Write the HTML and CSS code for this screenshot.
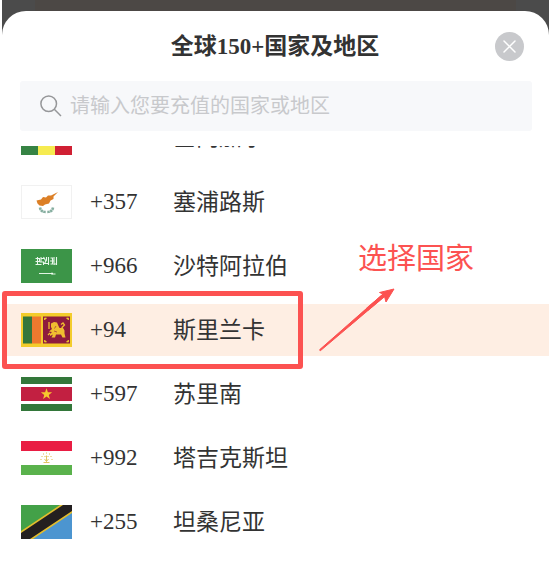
FILE: index.html
```html
<!DOCTYPE html>
<html lang="zh-CN">
<head>
    <meta charset="UTF-8">
    <meta name="viewport" content="width=device-width, initial-scale=1.0">
    <title>全球150+国家及地区</title>
    <link rel="stylesheet" href="styles.css">
</head>
<body>

    <main class="page">
        <section class="sheet">

            <!-- Title bar -->
            <header class="sheet-header">
                <h1>全球150+国家及地区</h1>
                <button class="close-button" type="button" aria-label="关闭">
                    <svg viewBox="0 0 29 29"><path d="M9 9 20 20M20 9 9 20" fill="none" stroke="#fff" stroke-width="1.500" stroke-linecap="round"/></svg>
                </button>
            </header>

            <!-- Search -->
            <label class="search-box">
                <svg class="search-icon" viewBox="0 0 22 22" aria-hidden="true">
                    <circle cx="8.700" cy="8.700" r="7.800"/>
                    <path d="M14.300 14.300 21 21"/>
                </svg>
                <input type="text" placeholder="请输入您要充值的国家或地区" aria-label="搜索国家或地区">
            </label>

            <!-- Country list -->
            <div class="country-scroll">
                <ul class="country-list">
                    <li>
                        <button class="country" type="button">
                            <svg class="flag" viewBox="0 0 51 34">
                                <rect width="17" height="34" fill="#368344"/>
                                <rect x="17" width="17" height="34" fill="#f6eb50"/>
                                <rect x="34" width="17" height="34" fill="#d02033"/>
                            </svg>
                            <span class="code">+221</span>
                            <span class="name">塞内加尔</span>
                        </button>
                    </li>
                    <li>
                        <button class="country" type="button">
                            <svg class="flag" viewBox="0 0 51 34">
                                <rect x=".5" y=".5" width="50" height="33" fill="#fff" stroke="#f1f1f1"/>
                                <path d="M15.500 15.500 20 14.500 22 12 25 12.500 27 10.500 30 10.500 37 7 32.500 11.500 32.500 14 29.500 15.500 28 18.500 24 19.500 22 21 18.500 20.500 16.500 18.500Z" fill="#dc7f26"/>
                                <path d="M19 22.500C19.500 26 22 27 25 27M32 22.500C31.500 26 29 27 26 27" fill="none" stroke="#86aea0" stroke-width="2.600" stroke-dasharray="2.400 .4"/>
                            </svg>
                            <span class="code">+357</span>
                            <span class="name">塞浦路斯</span>
                        </button>
                    </li>
                    <li>
                        <button class="country" type="button">
                            <svg class="flag" viewBox="0 0 51 34">
                                <rect width="51" height="34" fill="#3c9548"/>
                                <path d="M14.500 9.500h4v3h-4M16.500 8v8M14.500 15.500h6M20 8v5M18.500 13h4v3M22.500 8l2 3.500M25.500 8v3l-2 3.500h4M27.500 8v8M29.500 9h2v6h-2M33 8v8M35.500 8v8M29 12h4M20.500 9.500h3M33 15h3" fill="none" stroke="#e9f7eb" stroke-width="1.100"/>
                                <path d="M18 24.500h14M31 23.500v2M30.500 25h4" fill="none" stroke="#f4fff5" stroke-width=".9"/>
                            </svg>
                            <span class="code">+966</span>
                            <span class="name">沙特阿拉伯</span>
                        </button>
                    </li>
                    <li>
                        <button class="country selected" type="button">
                            <svg class="flag" viewBox="0 0 51 34">
                                <rect width="51" height="34" fill="#f3cc2c"/>
                                <rect x="2" y="3.500" width="9" height="27" fill="#34763b"/>
                                <rect x="11" y="3.500" width="9" height="27" fill="#ee792e"/>
                                <rect x="22" y="3.500" width="27" height="27" fill="#8e1b3d"/>
                                <path d="M23.500 5h2l-2 2ZM47.500 5h-2l2 2ZM23.500 29h2l-2-2ZM47.500 29h-2l2-2Z" fill="#f3cc2c" stroke="#f3cc2c" stroke-width=".7"/>
                                <path d="M30 10.500l3-1.500 3 .5 1.500 3.500 1 2H42l1.500 2.500v3l1 4h-3l-1.500-3H35l-1 3h-3.500l1.500-3-3 1.500v-2l2-2-3-.5 3-2.500-1-2Z" fill="#f0bd30"/>
                                <path d="M28 9v7M42 17l-1-2.500 2.500-2.500-1.500-2-2 1.500M29 20l-2 2" fill="none" stroke="#f0bd30" stroke-width="1.300"/>
                                <path d="M35 13l-1.500 2.500M33 18l3 1" fill="none" stroke="#8e1b3d" stroke-width=".6"/>
                            </svg>
                            <span class="code">+94</span>
                            <span class="name">斯里兰卡</span>
                        </button>

                        <!-- Hint drawn over the selected row -->
                        <span class="hint-frame"></span>
                        <span class="hint-text">选择国家</span>
                        <svg class="hint-arrow" viewBox="0 0 76 64" aria-hidden="true">
                            <path d="M1.300 62.800 65.500 8.500 67 14 75 1 60.500 4.500 64 6 .5 61.800Z" fill="#fc5251" stroke="#fc5251" stroke-linejoin="round"/>
                            <path d="M30 37.500 63 8" stroke="#fc5251" stroke-width="2.200"/>
                            <path d="M48 21.500 66 6.500" stroke="#fc5251" stroke-width="3.500"/>
                        </svg>
                    </li>
                    <li>
                        <button class="country" type="button">
                            <svg class="flag" viewBox="0 0 51 34">
                                <rect width="51" height="34" fill="#fff"/>
                                <path d="M0 0h51v7H0ZM0 27h51v7H0Z" fill="#33773a"/>
                                <rect y="10" width="51" height="14" fill="#c22041"/>
                                <path d="M25.500 11.200 26.900 15.200 31.100 15.300 27.800 17.900 28.900 22 25.500 19.600 22.100 22 23.200 17.900 19.900 15.300 24.100 15.200Z" fill="#f6c82e"/>
                            </svg>
                            <span class="code">+597</span>
                            <span class="name">苏里南</span>
                        </button>
                    </li>
                    <li>
                        <button class="country" type="button">
                            <svg class="flag" viewBox="0 0 51 34">
                                <rect width="51" height="34" fill="#fff"/>
                                <rect width="51" height="10" fill="#e91d43"/>
                                <rect y="24" width="51" height="10" fill="#5ab24c"/>
                                <path d="M25.500 14.500v6M23.500 18l2 2.500 2-2.500M22.500 21.500h6" fill="none" stroke="#e2c563" stroke-width="1"/>
                                <path d="M19.500 18.500h1M20.500 15.500h1M22 13h1M25 12h1M28 13h1M29.500 15.500h1M30.500 18.500h1M23.500 15.500h1M26.500 15.500h1" stroke="#dfbb4b" stroke-width="1.200"/>
                            </svg>
                            <span class="code">+992</span>
                            <span class="name">塔吉克斯坦</span>
                        </button>
                    </li>
                    <li>
                        <button class="country" type="button">
                            <svg class="flag" viewBox="0 0 51 34">
                                <rect width="51" height="34" fill="#43a148"/>
                                <path d="M51 0v34H0Z" fill="#4c95d0"/>
                                <path d="M0 26 39 0H51V8L12 34H0Z" fill="#e3bd2c"/>
                                <path d="M0 28 42 0h9v6L9 34H0Z" fill="#231f20"/>
                            </svg>
                            <span class="code">+255</span>
                            <span class="name">坦桑尼亚</span>
                        </button>
                    </li>
                </ul>
            </div>
        </section>
    </main>

</body>
</html>
```
FILE: styles.css
```css
* {
    box-sizing: border-box;
}

body {
    margin: 0;
    background-color: #fff;
    color: #333;
    font-family: 'Liberation Serif', 'Noto Sans CJK SC', serif;
}

button, input {
    font-family: inherit;
    color: inherit;
}

.page {
    min-height: 100vh;
    margin-left: 2px;
    padding-top: 11px;
    background: linear-gradient(to right, #4b4b4b 33px, #4c4845 33px, #4c4845 calc(100% - 33px), #4b4b4b calc(100% - 33px));
}

.sheet {
    min-height: calc(100vh - 11px);
    padding-top: 10px;
    background-color: #fff;
    border-radius: 24px 24px 0 0;
}

.sheet-header {
    display: grid;
    grid-template-columns: 1fr auto 1fr;
    align-items: center;
    height: 50px;
    padding: 0 25px 0 24px;
}

.sheet-header h1 {
    grid-column: 2;
    margin: 0;
    padding-top: 2px;
    font-size: 23px;
    line-height: 32px;
}

.close-button {
    justify-self: end;
    width: 29px;
    height: 29px;
    padding: 0;
    border: none;
    border-radius: 50%;
    background-color: #c8c9cc;
    cursor: pointer;
}

.close-button svg {
    display: block;
}

/* Search */
.search-box {
    display: flex;
    align-items: center;
    gap: 8px;
    height: 50px;
    margin: 10px 17px 0 18px;
    padding: 0 20px;
    background-color: #f7f8fa;
    border-radius: 3px;
}

.search-icon {
    flex: none;
    width: 22px;
    height: 22px;
    fill: none;
    stroke: #969799;
    stroke-width: 1.5;
}

.search-box input {
    flex: 1;
    min-width: 0;
    padding: 0;
    border: none;
    outline: none;
    background: none;
    font-size: 20px;
    line-height: 30px;
}

.search-box input::placeholder {
    color: #c8c9cc;
}

/* Country list, scrolled part of a row down */
.country-scroll {
    margin-top: 15px;
    overflow: hidden;
}

.country-list {
    display: flex;
    flex-direction: column;
    gap: 12px;
    margin: -34px 0 0;
    padding: 0 0 18px;
    list-style: none;
}

.country-list li {
    position: relative;
}

.country {
    display: grid;
    grid-template-columns: 51px 65px 1fr;
    column-gap: 18px;
    align-items: center;
    width: 100%;
    height: 52px;
    padding: 0 19px;
    border: none;
    background-color: #fff;
    font-size: 23px;
    line-height: 34px;
    text-align: left;
    cursor: pointer;
}

.country.selected {
    background-color: #feeee3;
}

.flag {
    display: block;
    width: 51px;
    height: 34px;
}

.country-list li + li .name {
    padding-top: 2px;
}

/* Hint */
.hint-frame {
    position: absolute;
    z-index: 1;
    top: -13px;
    left: 0;
    width: 301px;
    height: 78px;
    border: 5px solid #fc5251;
    border-radius: 3px;
    pointer-events: none;
}

.hint-text {
    position: absolute;
    z-index: 1;
    top: -66px;
    left: 356px;
    color: #fc5251;
    font-size: 29px;
    line-height: 42px;
    white-space: nowrap;
    pointer-events: none;
}

.hint-arrow {
    position: absolute;
    z-index: 1;
    top: -16px;
    left: 317px;
    width: 76px;
    height: 64px;
    pointer-events: none;
}
```
